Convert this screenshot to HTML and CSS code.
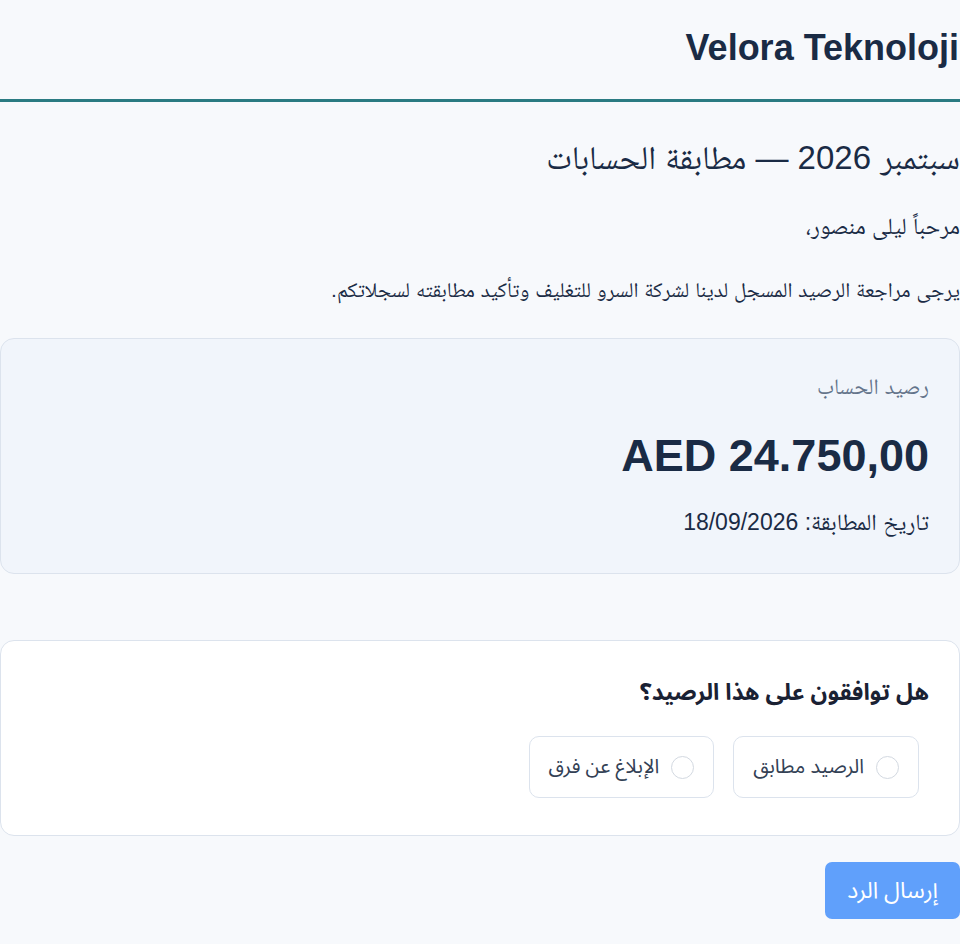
FILE: index.html
```html
<!DOCTYPE html>
<html lang="ar" dir="rtl">
<head>
<meta charset="utf-8">
<title>مطابقة الحسابات</title>
<link rel="stylesheet" href="styles.css">
</head>
<body>
<header class="top">
  <h1 class="brand">Velora Teknoloji</h1>
</header>
<main class="page">
  <h2 class="title">سبتمبر 2026 — مطابقة الحسابات</h2>
  <p class="greet">مرحباً ليلى منصور،</p>
  <p class="text">يرجى مراجعة الرصيد المسجل لدينا لشركة السرو للتغليف وتأكيد مطابقته لسجلاتكم.</p>
  <section class="balance">
    <div class="label">رصيد الحساب</div>
    <div class="amount" dir="ltr">AED 24.750,00</div>
    <div class="date">تاريخ المطابقة: 18/09/2026</div>
  </section>
  <section class="question">
    <div class="q">هل توافقون على هذا الرصيد؟</div>
    <div class="options">
      <label class="opt"><span class="radio"></span><span>الرصيد مطابق</span></label>
      <label class="opt"><span class="radio"></span><span>الإبلاغ عن فرق</span></label>
    </div>
  </section>
  <div class="actions">
    <button class="send" type="button">إرسال الرد</button>
  </div>
</main>
</body>
</html>
```
FILE: styles.css
```css
html, body {
  margin: 0;
  padding: 0;
  background: #f7f9fc;
}
body {
  font-family: "Liberation Sans", "Noto Naskh Arabic", sans-serif;
  color: #1a2b45;
  direction: rtl;
}
.top {
  height: 99px;
  border-bottom: 3px solid #2a7b82;
  display: flex;
  align-items: center;
  padding-right: 1px;
}
.brand {
  margin: -3px 0 0;
  font-size: 36px;
  line-height: 40px;
  font-weight: 700;
  color: #1a2b45;
}
.page {
  padding-top: 36px;
}
.title {
  margin: 0 0 33px;
  font-size: 33px;
  line-height: 40px;
  font-weight: 400;
}
.greet {
  margin: 0 0 34px;
  font-size: 23px;
  line-height: 30px;
}
.text {
  margin: 0 0 33px;
  font-size: 21px;
  line-height: 30px;
}
.balance {
  background: #f1f5fb;
  border: 1px solid #dce3ed;
  border-radius: 14px;
  padding: 36px 30px 36px;
}
.label {
  color: #64748b;
  font-size: 22px;
  line-height: 24px;
}
.amount {
  text-align: right;
  font-size: 45px;
  line-height: 52px;
  font-weight: 700;
  margin: 31px 0 25px;
}
.date {
  font-size: 23px;
  line-height: 30px;
}
.question {
  margin-top: 66px;
  background: #ffffff;
  border: 1px solid #dce3ed;
  border-radius: 14px;
  padding: 34px 30px 37px;
  font-family: "Noto Sans", "Noto Sans Arabic", sans-serif;
}
.q {
  font-size: 23px;
  line-height: 32px;
  font-weight: 700;
  color: #1a2133;
}
.options {
  display: flex;
  gap: 19px;
  margin-top: 29px;
  padding-right: 10px;
}
.opt {
  display: flex;
  align-items: center;
  gap: 12px;
  height: 62px;
  box-sizing: border-box;
  padding: 0 19px;
  border: 1px solid #dce3ed;
  border-radius: 10px;
  background: #fff;
  font-size: 20px;
  color: #334155;
}
.radio {
  width: 23px;
  height: 23px;
  box-sizing: border-box;
  border: 1.5px solid #d3d9e1;
  border-radius: 50%;
}
.actions {
  display: flex;
  margin-top: 26px;
}
.send {
  font-family: "Noto Sans", "Noto Sans Arabic", sans-serif;
  font-size: 23px;
  color: #fff;
  background: #60a0fb;
  border: none;
  border-radius: 7px;
  height: 57px;
  padding: 0 22px;
}
```
